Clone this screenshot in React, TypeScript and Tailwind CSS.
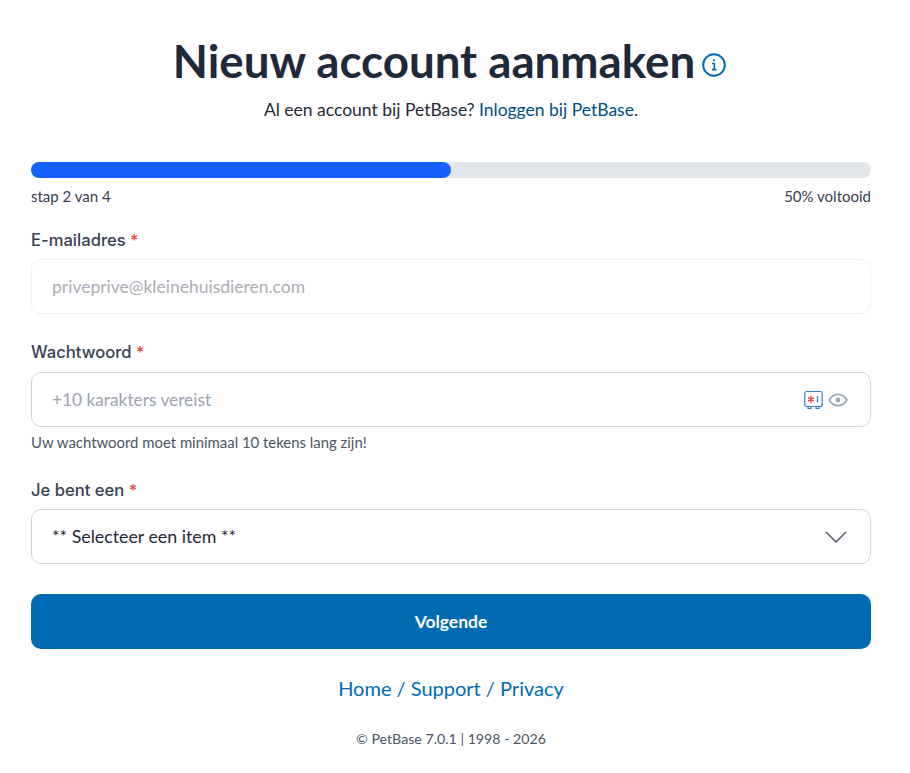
const font = "font-['Lato','Inter',sans-serif]";

function Label({ text }: { text: string }) {
  return (
    <label className="block font-['Inter',sans-serif] text-[16.600px] leading-[24px] font-medium text-[#374151]">
      {text} <span className="text-[#ef4444] text-[16px] leading-none">*</span>
    </label>
  );
}

export default function App() {
  return (
    <div className={`${font} w-[910px] h-[773px] bg-white px-[31px] pt-[33px] text-[#1f2937]`}>
      <div className="w-[840px]">
        <div className="flex items-center justify-center gap-[6px] h-[56px]">
          <h1 className="text-[45.700px] leading-[56px] font-bold text-[#1e293b]">Nieuw account aanmaken</h1>
          <svg className="mt-2 mr-[2px]" width="26" height="26" viewBox="0 0 26 26" fill="none" stroke="#006bb3" strokeWidth="2">
            <circle cx="13" cy="13" r="10.8" />
            <path d="M11 11.5h2.3v6M11 17.6h4.4" strokeWidth="1.6" />
            <circle cx="13" cy="8.3" r="1.1" fill="#006bb3" stroke="none" />
          </svg>
        </div>
        <p className="mt-[9px] text-center text-[17.500px] leading-[24px] text-[#1f2937]">
          Al een account bij PetBase? <a className="text-[#004f83]">Inloggen bij PetBase</a>.
        </p>

        <div className="mt-[40px] h-[16px] rounded-full bg-[#e2e6ea]">
          <div className="h-full w-1/2 rounded-full bg-[#1761fd]" />
        </div>
        <div className="mt-[8px] flex justify-between text-[15px] leading-[20px] text-[#374151]">
          <span>stap 2 van 4</span>
          <span>50% voltooid</span>
        </div>

        <div className="mt-[22px]">
          <Label text="E-mailadres" />
          <div className="mt-[7px] flex h-[55px] items-center rounded-[10px] border border-[#f0f1f4] px-[20px] pt-[2px] text-[17.500px] text-[#a9adb5]">
            priveprive@kleinehuisdieren.com
          </div>
        </div>

        <div className="mt-[26px]">
          <Label text="Wachtwoord" />
          <div className="mt-[8px] flex h-[55px] items-center justify-between rounded-[10px] border border-[#d1d5db] pl-[20px] pr-[22px] text-[17.300px] text-[#9ca3af]">
            <span>+10 karakters vereist</span>
            <span className="flex items-center gap-[5px]">
              <svg width="19" height="20" viewBox="0 0 19 20" fill="none">
                <path d="M4 16.500v2h3v-2M12 16.500v2h3v-2" stroke="#2f7fc1" strokeWidth="1.2" />
                <rect x="0.800" y="1.500" width="17.400" height="15" rx="2" stroke="#2f7fc1" strokeWidth="1.2" />
                <path d="M7 6v7M4 7.700l6 3.500M10 7.700l-6 3.500" stroke="#ef4444" strokeWidth="1.400" />
                <path d="M13.500 6v6.500" stroke="#2f7fc1" strokeWidth="1.200" />
              </svg>
              <svg width="20" height="20" viewBox="0 0 20 20" fill="none" stroke="#9ca3af" strokeWidth="1.600">
                <path d="M1.200 10C3.200 6.400 6.200 4.400 10 4.400s6.800 2 8.800 5.600c-2 3.600-5 5.600-8.800 5.600S3.200 13.600 1.200 10z" />
                <circle cx="10" cy="10" r="2.400" fill="#9ca3af" stroke="none" />
              </svg>
            </span>
          </div>
          <p className="mt-[5px] text-[14.900px] leading-[20px] text-[#4b5563]">Uw wachtwoord moet minimaal 10 tekens lang zijn!</p>
        </div>

        <div className="mt-[26px]">
          <Label text="Je bent een" />
          <div className="mt-[7px] flex h-[55px] items-center justify-between rounded-[10px] border border-[#d1d5db] pl-[20px] pr-[23px] text-[17.800px] text-[#1f2937]">
            <span>** Selecteer een item **</span>
            <svg width="22" height="12" viewBox="0 0 22 12" fill="none" stroke="#5b6478" strokeWidth="1.600">
              <path d="M1 1l10 10L21 1" />
            </svg>
          </div>
        </div>

        <button className="mt-[30px] block h-[55px] w-full rounded-[10px] bg-[#006bb3] pt-[2px] text-[17.500px] font-bold text-white">Volgende</button>

        <div className="mt-[25px] text-center text-[20px] leading-[28px] text-[#006bb3]">
          <a>Home</a> / <a>Support</a> / <a>Privacy</a>
        </div>
        <p className="mt-[27px] text-center text-[14.200px] leading-[20px] text-[#4b5563]">© PetBase 7.0.1 | 1998 - 2026</p>
      </div>
    </div>
  );
}
